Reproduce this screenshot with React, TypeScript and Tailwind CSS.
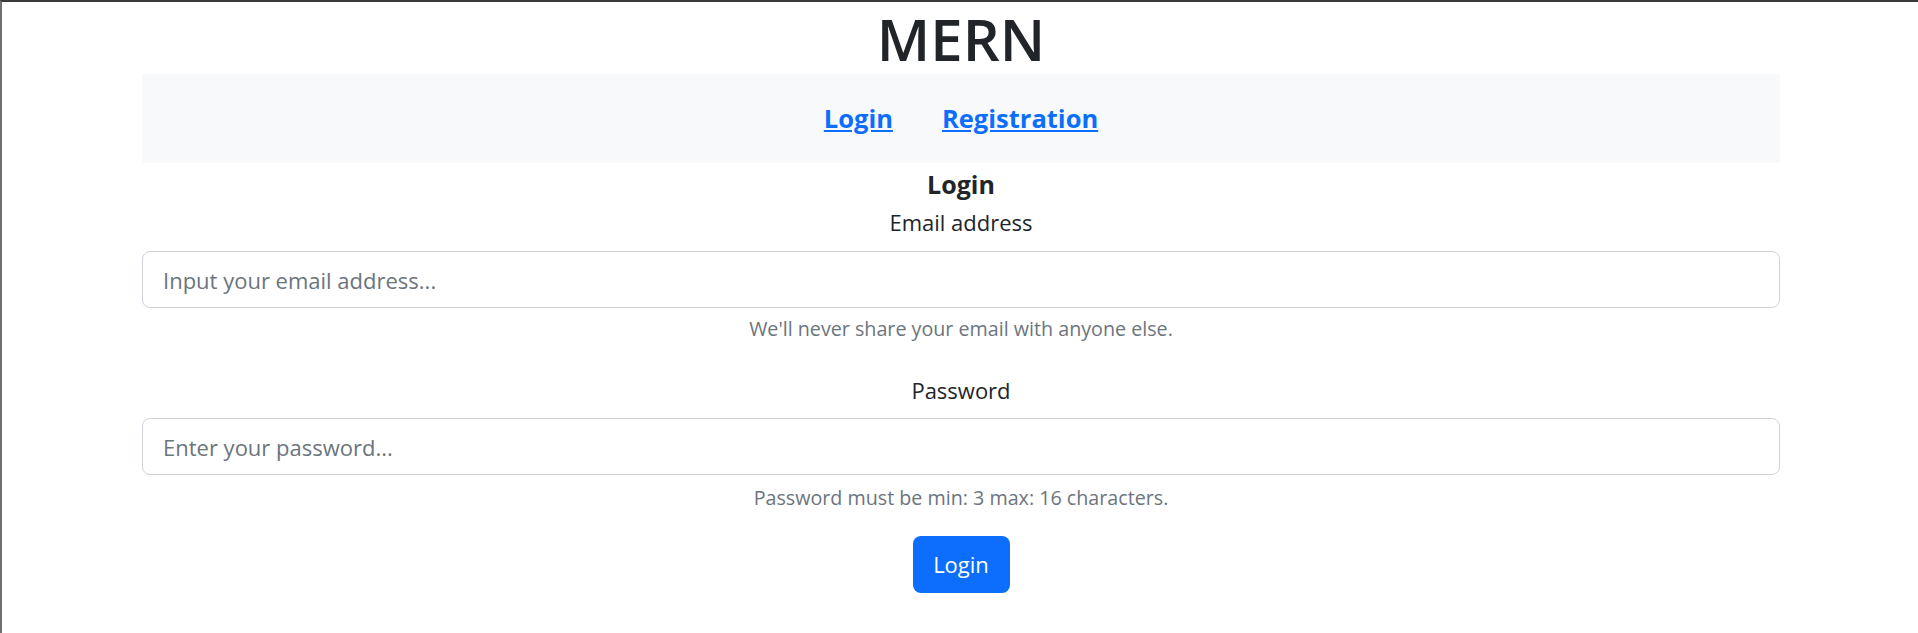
import React from "react";

export default function App() {
  return (
    <div className="min-h-screen border-l-2 border-t-2 border-l-[#707070] border-t-[#3a3a3a] bg-white font-['Open_Sans',sans-serif] text-[#212529]">
      <div className="ml-[140px] mr-[138px]">
        <h1 className="pt-[2px] text-center text-[58px] font-semibold leading-[70px] text-[#212529]">
          MERN
        </h1>

        <nav className="flex h-[89px] items-center justify-center gap-[49px] bg-[#f8f9fa]">
          <a href="#" className="text-[25.5px] font-bold text-[#0d6efd] underline">
            Login
          </a>
          <a href="#" className="text-[25.5px] font-bold text-[#0d6efd] underline">
            Registration
          </a>
        </nav>

        <form className="flex flex-col items-center">
          <h5 className="mt-[6px] text-[25px] font-bold leading-[30px]">Login</h5>

          <label className="mt-[7px] text-[22px] leading-[33px]">Email address</label>
          <input
            type="email"
            placeholder="Input your email address..."
            className="mt-[12px] h-[57px] w-full rounded-[8px] border border-[#ced4da] bg-white px-[20px] text-[22px] text-[#212529] outline-none placeholder:text-[#6c757d]"
          />
          <p className="mt-[7px] text-[19.7px] leading-[27px] text-[#6c757d]">
            We'll never share your email with anyone else.
          </p>

          <label className="mt-[32px] text-[22px] leading-[33px]">Password</label>
          <input
            type="password"
            placeholder="Enter your password..."
            className="mt-[11px] h-[57px] w-full rounded-[8px] border border-[#ced4da] bg-white px-[20px] text-[22px] text-[#212529] outline-none placeholder:text-[#6c757d]"
          />
          <p className="mt-[9px] text-[19.7px] leading-[27px] text-[#6c757d]">
            Password must be min: 3 max: 16 characters.
          </p>

          <button
            type="button"
            className="mt-[25px] h-[57px] w-[97px] rounded-[8px] bg-[#0d6efd] text-[22px] text-white"
          >
            Login
          </button>
        </form>
      </div>
    </div>
  );
}
